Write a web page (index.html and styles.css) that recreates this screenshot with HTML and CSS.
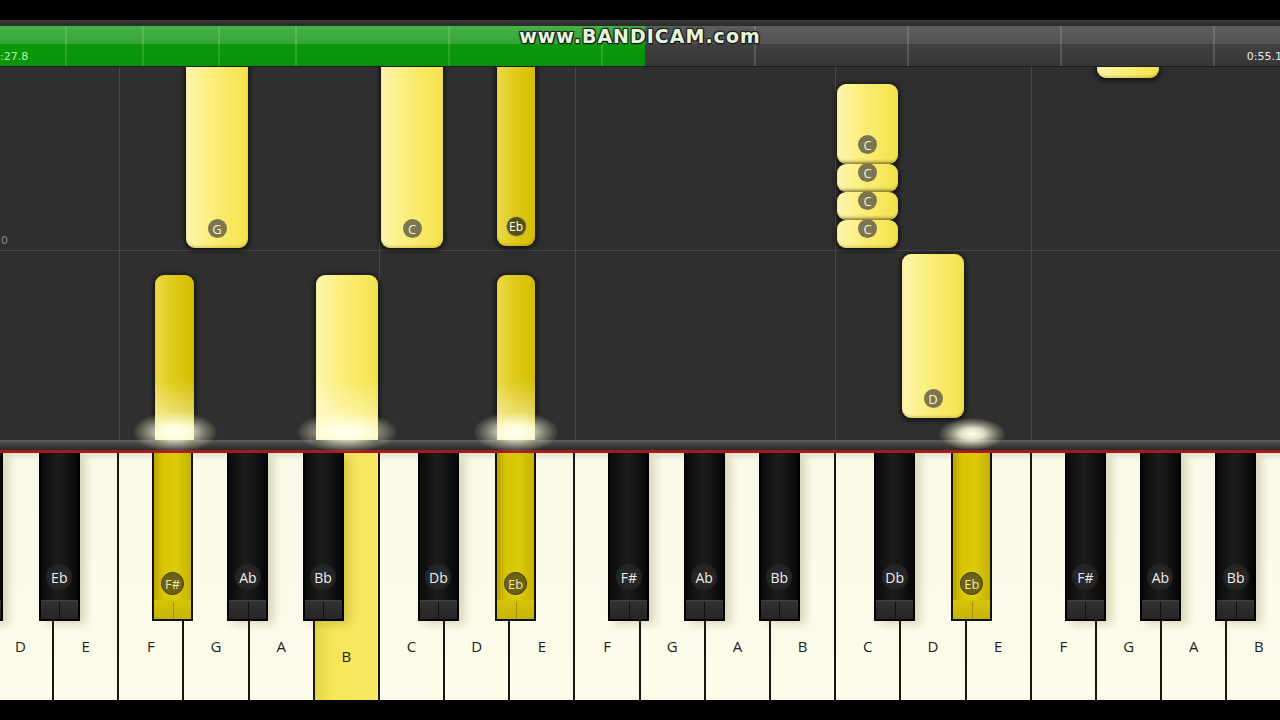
FILE: index.html
```html
<!DOCTYPE html>
<html lang="en">
<head>
    <meta charset="UTF-8">
    <meta name="viewport" content="width=device-width, initial-scale=1.0">
    <title>Piano Roll</title>
    <link rel="stylesheet" href="styles.css">
</head>
<body>
<div class="screen">
    <div class="top-black"></div>
    <div class="ruler"></div>

    <div class="timeline">
        <div class="progress" style="width: 645px"></div>
        <div class="dividers"></div>
        <span class="time">:27.8</span>
        <span class="time end">0:55.1</span>
        <div class="watermark">www.BANDICAM.com</div>
    </div>

    <div class="roll">
        <!-- grid -->
        <div class="vline" style="left: 119px"></div>
        <div class="vline" style="left: 575px"></div>
        <div class="vline" style="left: 835px"></div>
        <div class="vline" style="left: 1031px"></div>
        <div class="vline short" style="left: 379px"></div>
        <div class="hline" style="top: 184px"></div>
        <span class="measure">0</span>

        <!-- upcoming notes -->
        <div class="note white" style="left: 186px; top: -20px; width: 62px; height: 202px"><span class="tag">G</span></div>
        <div class="note white" style="left: 381px; top: -20px; width: 62px; height: 202px"><span class="tag">C</span></div>
        <div class="note black" style="left: 497px; top: -20px; width: 38px; height: 200px"><span class="tag">Eb</span></div>
        <div class="note white" style="left: 1097px; top: -30px; width: 62px; height: 42px"></div>

        <div class="note white" style="left: 837px; top: 18px; width: 61px; height: 80px"><span class="tag">C</span></div>
        <div class="note white" style="left: 837px; top: 98px; width: 61px; height: 28px"><span class="tag">C</span></div>
        <div class="note white" style="left: 837px; top: 126px; width: 61px; height: 28px"><span class="tag">C</span></div>
        <div class="note white" style="left: 837px; top: 154px; width: 61px; height: 28px"><span class="tag">C</span></div>

        <div class="note white" style="left: 902px; top: 188px; width: 62px; height: 164px"><span class="tag">D</span></div>

        <!-- sounding notes -->
        <div class="note black hit" style="left: 155px; top: 209px; width: 39px; height: 165px"></div>
        <div class="note white hit" style="left: 316px; top: 209px; width: 62px; height: 165px"></div>
        <div class="note black hit" style="left: 497px; top: 209px; width: 38px; height: 165px"></div>

        <div class="glow" style="left: 175px"></div>
        <div class="glow wide" style="left: 347px"></div>
        <div class="glow" style="left: 516px"></div>
        <div class="glow small" style="left: 972px"></div>
    </div>

    <div class="keybed"></div>

    <div class="keyboard">
        <div class="wkey"><div class="bkey db"><i class="tip"></i></div></div>
        <div class="wkey"><span class="wlabel">D</span><div class="bkey eb"><span class="blabel">Eb</span><i class="tip"></i></div></div>
        <div class="wkey"><span class="wlabel">E</span></div>
        <div class="wkey"><span class="wlabel">F</span><div class="bkey fs on"><span class="blabel">F#</span><i class="tip"></i></div></div>
        <div class="wkey"><span class="wlabel">G</span><div class="bkey ab"><span class="blabel">Ab</span><i class="tip"></i></div></div>
        <div class="wkey"><span class="wlabel">A</span><div class="bkey bb"><span class="blabel">Bb</span><i class="tip"></i></div></div>
        <div class="wkey on"><span class="wlabel">B</span></div>

        <div class="wkey"><span class="wlabel">C</span><div class="bkey db"><span class="blabel">Db</span><i class="tip"></i></div></div>
        <div class="wkey"><span class="wlabel">D</span><div class="bkey eb on"><span class="blabel">Eb</span><i class="tip"></i></div></div>
        <div class="wkey"><span class="wlabel">E</span></div>
        <div class="wkey"><span class="wlabel">F</span><div class="bkey fs"><span class="blabel">F#</span><i class="tip"></i></div></div>
        <div class="wkey"><span class="wlabel">G</span><div class="bkey ab"><span class="blabel">Ab</span><i class="tip"></i></div></div>
        <div class="wkey"><span class="wlabel">A</span><div class="bkey bb"><span class="blabel">Bb</span><i class="tip"></i></div></div>
        <div class="wkey"><span class="wlabel">B</span></div>

        <div class="wkey"><span class="wlabel">C</span><div class="bkey db"><span class="blabel">Db</span><i class="tip"></i></div></div>
        <div class="wkey"><span class="wlabel">D</span><div class="bkey eb on"><span class="blabel">Eb</span><i class="tip"></i></div></div>
        <div class="wkey"><span class="wlabel">E</span></div>
        <div class="wkey"><span class="wlabel">F</span><div class="bkey fs"><span class="blabel">F#</span><i class="tip"></i></div></div>
        <div class="wkey"><span class="wlabel">G</span><div class="bkey ab"><span class="blabel">Ab</span><i class="tip"></i></div></div>
        <div class="wkey"><span class="wlabel">A</span><div class="bkey bb"><span class="blabel">Bb</span><i class="tip"></i></div></div>
        <div class="wkey"><span class="wlabel">B</span></div>
    </div>

    <div class="bottom-black"></div>
</div>
</body>
</html>
```

FILE: styles.css
```css
body {
    margin: 0;
    background: #000;
}
.screen {
    width: 1280px;
    height: 720px;
    overflow: hidden;
    display: flex;
    flex-direction: column;
    background: #000;
    font-family: "DejaVu Sans", sans-serif;
}
.top-black {
    flex: none;
    height: 20px;
    background: #000;
}
.ruler {
    flex: none;
    height: 6px;
    background: linear-gradient(#3b3b3b, #2b2b2b);
}

/* timeline */
.timeline {
    flex: none;
    height: 40px;
    position: relative;
    z-index: 3;
    display: flex;
    justify-content: space-between;
    align-items: flex-end;
    background: linear-gradient(#5e5e5e 0, #535353 44%, #404040 46%, #363636 100%);
    box-shadow: 0 1px 0 #1c1c1c;
}
.progress {
    position: absolute;
    left: 0;
    top: 0;
    bottom: 0;
    background: linear-gradient(#46b146 0, #35a535 44%, #0b990b 46%, #07920a 100%);
}
.dividers {
    position: absolute;
    left: 0;
    right: 0;
    top: 0;
    bottom: 0;
    background-image: repeating-linear-gradient(90deg, transparent 0 75.5px, rgba(255, 255, 255, 0.28) 75.5px 76.5px);
    background-position: -9.5px 0;
}
.time {
    position: relative;
    font-size: 11px;
    line-height: 14px;
    padding-bottom: 2px;
    color: #b9f3ae;
}
.time.end {
    color: #ececec;
    margin-right: -2px;
}
.watermark {
    position: absolute;
    left: 0;
    right: 0;
    top: 0;
    text-align: center;
    font-weight: bold;
    font-size: 19px;
    line-height: 20px;
    letter-spacing: 1px;
    color: #e3f7db;
    text-shadow: 1px 1px 0 #111, -1px -1px 0 #222, 1px -1px 0 #222, -1px 1px 0 #222, 0 0 3px #000;
}

/* piano roll */
.roll {
    flex: none;
    height: 374px;
    position: relative;
    background: #2f2f2f;
}
.vline {
    position: absolute;
    top: 0;
    bottom: 0;
    width: 1px;
    background: #484848;
}
.vline.short {
    top: 176px;
    bottom: 160px;
}
.hline {
    position: absolute;
    left: 0;
    right: 0;
    height: 1px;
    background: #464646;
}
.measure {
    position: absolute;
    left: 1px;
    top: 168px;
    font-size: 11px;
    color: #8a8a8a;
}
.note {
    position: absolute;
    box-sizing: border-box;
    border-radius: 9px;
    display: flex;
    align-items: flex-end;
    justify-content: center;
    box-shadow: 0 1px 4px 2px rgba(0, 0, 0, 0.55), inset 0 -2px 2px rgba(140, 110, 0, 0.25);
}
.note.white {
    background: linear-gradient(90deg, #fdf6ae 0%, #fbee76 45%, #f4e24b 100%);
}
.note.black {
    background: linear-gradient(90deg, #ecd94c 0%, #e1cd1d 40%, #d3be02 100%);
}
.note.hit {
    border-radius: 9px 9px 0 0;
}
.note.hit::after {
    content: "";
    position: absolute;
    left: 0;
    right: 0;
    bottom: 0;
    height: 60px;
    background: linear-gradient(rgba(255, 255, 235, 0), rgba(255, 255, 238, 0.7));
}
.tag {
    width: 19px;
    height: 19px;
    margin-bottom: 10px;
    border-radius: 50%;
    background: #7b7550;
    color: #f6f2da;
    font: 13px "Open Sans", sans-serif;
    display: flex;
    align-items: center;
    justify-content: center;
}
.note.black .tag {
    background: #5a500e;
    box-shadow: 0 0 0 1px #b7ab55;
    color: #fff;
    font-size: 12px;
}
.glow {
    position: absolute;
    top: 346px;
    width: 84px;
    height: 40px;
    margin-left: -42px;
    background: radial-gradient(ellipse at center, #fffff4 0%, rgba(255, 255, 228, 0.85) 25%, rgba(255, 255, 215, 0.35) 50%, rgba(255, 255, 200, 0) 72%);
}
.glow.wide {
    width: 100px;
    margin-left: -50px;
}
.glow.small {
    width: 66px;
    height: 32px;
    margin-left: -33px;
    top: 352px;
}

/* keyboard */
.keybed {
    flex: none;
    height: 10px;
    background: linear-gradient(#5e5e5e, #474747 35%, #2b2b2b);
}
.keyboard {
    flex: none;
    height: 250px;
    box-sizing: border-box;
    border-top: 3px solid #a8191a;
    margin-left: -76.4px;
    display: flex;
}
.wkey {
    flex: none;
    position: relative;
    width: 65.2px;
    box-sizing: border-box;
    border-right: 2px solid #171717;
    background: linear-gradient(#e4e2cf, #fbf9e7 8px, #fdfbe9);
    display: flex;
    flex-direction: column;
    justify-content: flex-end;
    align-items: center;
}
.wlabel {
    margin-bottom: 45px;
    font: 15px/18px "Open Sans", sans-serif;
    color: #1e1e1e;
}
.wkey.on {
    background: linear-gradient(90deg, #e6d546, #f6e65a 30%, #f8e862);
}
.wkey.on .wlabel {
    margin-bottom: 35px;
}
.bkey {
    position: absolute;
    top: 0;
    z-index: 2;
    width: 41px;
    height: 168px;
    box-sizing: border-box;
    border: 2px solid #000;
    border-top: none;
    background: linear-gradient(90deg, #0a0a0a, #1c1c1c 45%, #141414 70%, #060606);
    display: flex;
    flex-direction: column;
    align-items: center;
    justify-content: flex-end;
    box-shadow: 6px 3px 8px rgba(70, 60, 0, 0.18);
}
.bkey.db { left: 38px; }
.bkey.eb { left: 50px; }
.bkey.fs { left: 33px; }
.bkey.ab { left: 43px; }
.bkey.bb { left: 53px; }
.blabel {
    width: 26px;
    height: 26px;
    margin-bottom: 10px;
    border-radius: 50%;
    background: radial-gradient(#2b2b2b, #1f1f1f);
    color: #eeeeee;
    font: 14px "Open Sans", sans-serif;
    display: flex;
    align-items: center;
    justify-content: center;
}
.tip {
    position: relative;
    width: 100%;
    height: 19px;
    background: linear-gradient(#464646 0, #303030 2px, #262626);
}
.tip::after {
    content: "";
    position: absolute;
    left: 50%;
    top: 2px;
    bottom: 0;
    width: 1px;
    background: #111;
}
.bkey.on {
    background: linear-gradient(90deg, #b8a500, #d8c604 25%, #dccb0c 60%, #c3b100);
    border-color: #111;
    box-shadow: none;
}
.bkey.on .blabel {
    width: 21px;
    height: 21px;
    margin-bottom: 5px;
    background: #6c6114;
    border: 1px solid #3f3700;
    color: #efe6a6;
    font-size: 13px;
}
.bkey.on .tip {
    background: linear-gradient(#d6c40a, #c7b402);
}
.bkey.on .tip::after {
    background: #9d8e00;
}
.bottom-black {
    flex: none;
    height: 20px;
    background: #000;
}
```
